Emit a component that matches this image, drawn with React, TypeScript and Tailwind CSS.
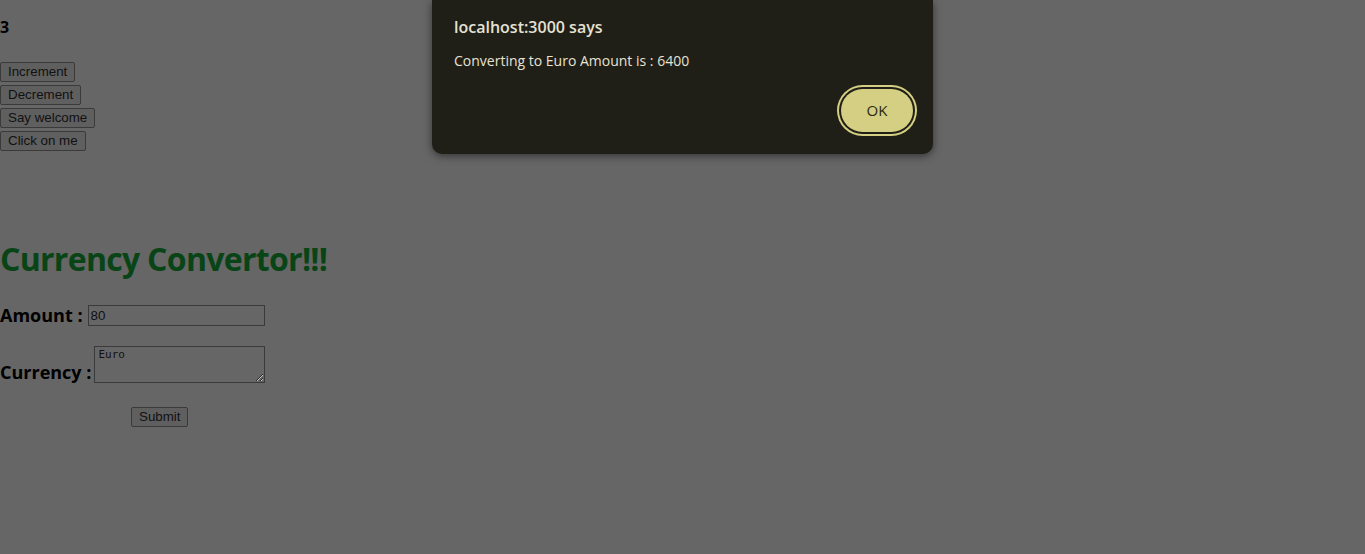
import React from "react";

const btn =
  "border border-[#3a3a3a] bg-[#5f5f5f] px-[7px] h-[20px] text-[13.33px] leading-[18px] text-[#111] rounded-[2px]";

export default function App() {
  return (
    <div className="relative min-h-[554px] w-full bg-[#666666] text-black font-['Open_Sans','Noto_Sans',sans-serif] overflow-hidden">
      <div className="pt-[15px]">
        <h3 className="text-[16px] font-bold leading-[24px]">3</h3>
        <div className="mt-[23px] flex flex-col items-start gap-[3px] font-['Liberation_Sans',Arial,sans-serif]">
          <button className={btn}>Increment</button>
          <button className={btn}>Decrement</button>
          <button className={btn}>Say welcome</button>
          <button className={btn}>Click on me</button>
        </div>

        <h1 className="mt-[86px] text-[32px] font-bold leading-[44px] text-[#084416] tracking-[-0.7px]">
          Currency Convertor!!!
        </h1>

        <div className="mt-[22px] flex items-center">
          <span className="text-[18px] font-bold leading-[24px]">Amount :</span>
          <input
            readOnly
            value="80"
            className="ml-[5px] h-[21px] w-[177px] border border-[#3a3a3a] bg-[#666666] px-[2px] text-[13.33px] text-[#111] font-['Liberation_Sans',Arial,sans-serif] outline-none"
          />
        </div>

        <div className="mt-[19px] flex items-end">
          <span className="text-[18px] font-bold leading-[22px]">Currency :</span>
          <textarea
            readOnly
            value="Euro"
            className="ml-[3px] h-[37px] w-[171px] border border-[#3a3a3a] bg-[#666666] px-[3px] py-[1px] text-[11px] leading-[14px] text-[#111] font-['DejaVu_Sans_Mono',monospace] outline-none"
          />
        </div>

        <div className="mt-[21px] pl-[131px] font-['Liberation_Sans',Arial,sans-serif]">
          <button className={btn}>Submit</button>
        </div>
      </div>

      <div className="absolute left-[432px] top-0 w-[501px] h-[154px] rounded-b-[10px] bg-[#1f1e17] shadow-[0_2px_8px_rgba(0,0,0,0.5)] px-[22px] pt-[14px]">
        <div className="text-[16px] font-semibold leading-[26px] text-[#e6e2d2]">
          localhost:3000 says
        </div>
        <div className="mt-[11px] text-[14px] leading-[20px] text-[#e6e2d2]">
          Converting to Euro Amount is : 6400
        </div>
        <div className="flex justify-end mt-[18px] -mr-[2px]">
          <button className="h-[43px] w-[72px] rounded-full bg-[#d4cf82] text-[15px] text-[#2a2a10] ring-2 ring-[#d4cf82] ring-offset-2 ring-offset-[#1f1e17]">
            OK
          </button>
        </div>
      </div>
    </div>
  );
}
